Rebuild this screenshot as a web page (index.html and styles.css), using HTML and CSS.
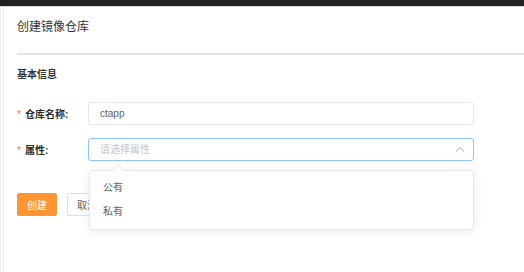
FILE: index.html
```html
<!DOCTYPE html>
<html lang="zh-CN">
<head>
    <meta charset="UTF-8">
    <title>创建镜像仓库</title>
    <link rel="stylesheet" href="styles.css">
</head>
<body>
    <div class="topbar"></div>
    <div class="page">
        <div class="panel">
            <div class="panel-header">创建镜像仓库</div>
            <div class="panel-body">
                <div class="section-title">基本信息</div>
                <form class="form">
                    <div class="form-item">
                        <label class="form-label"><span class="req">*</span>仓库名称:</label>
                        <div class="form-control">
                            <input class="input" type="text" value="ctapp">
                        </div>
                    </div>
                    <div class="form-item">
                        <label class="form-label"><span class="req">*</span>属性:</label>
                        <div class="form-control select">
                            <input class="input is-focus" type="text" placeholder="请选择属性" readonly>
                            <svg class="select-arrow" width="10" height="6" viewBox="0 0 10 6">
                                <path d="M1 5.5 L5 1.5 L9 5.5" fill="none" stroke="#c0c4cc" stroke-width="1.1"/>
                            </svg>
                            <div class="dropdown">
                                <span class="dropdown-arrow"></span>
                                <ul class="dropdown-list">
                                    <li>公有</li>
                                    <li>私有</li>
                                </ul>
                            </div>
                        </div>
                    </div>
                    <div class="form-actions">
                        <button type="button" class="btn btn-primary">创建</button>
                        <button type="button" class="btn">取消</button>
                    </div>
                </form>
            </div>
        </div>
    </div>
</body>
</html>
```

FILE: styles.css
```css
body {
    margin: 0;
    font-family: "Liberation Sans", "Noto Sans CJK SC", sans-serif;
    background: #fff;
    color: #303133;
}
.topbar {
    height: 6px;
    background-color: #222;
    border-bottom: 1px solid #d8d8d8;
}
.page {
    padding-left: 2px;
    border-left: 1px solid #f0f0f0;
    height: 265px;
    box-sizing: border-box;
}
.panel {
    border-left: 1px solid #ececec;
    height: 100%;
}
.panel-header {
    margin-left: 13px;
    padding: 12px 0 18px;
    font-size: 12px;
    line-height: 16px;
    color: #333;
    border-bottom: 2px solid #e5e5e5;
}
.panel-body {
    padding: 13px 0 0 13px;
}
.section-title {
    font-size: 10px;
    line-height: 14px;
    font-weight: bold;
    color: #333;
    margin-bottom: 20px;
}
.form-item {
    display: flex;
    align-items: center;
    margin-bottom: 13px;
}
.form-label {
    width: 71px;
    font-size: 10px;
    font-weight: bold;
    color: #2b2b2b;
}
.req {
    color: #f56c6c;
    margin-right: 4px;
    font-weight: normal;
}
.form-control {
    position: relative;
    width: 386px;
}
.input {
    display: block;
    width: 100%;
    height: 23px;
    box-sizing: border-box;
    padding: 0 11px;
    border: 1px solid #e4e7ed;
    border-radius: 3px;
    font-family: inherit;
    font-size: 10px;
    color: #606266;
    outline: none;
    background: #fff;
}
.input.is-focus {
    border-color: #8fc3ff;
}
.input::placeholder {
    color: #c0c4cc;
}
.select-arrow {
    position: absolute;
    right: 9px;
    top: 8px;
}
.dropdown {
    position: absolute;
    top: 32px;
    left: 1px;
    right: 0;
    background: #fff;
    border: 1px solid #e4e7ed;
    border-radius: 3px;
    box-shadow: 0 2px 10px rgba(0, 0, 0, 0.08);
    z-index: 5;
}
.dropdown-arrow {
    position: absolute;
    top: -5px;
    left: 24px;
    width: 8px;
    height: 8px;
    background: #fff;
    border-left: 1px solid #e4e7ed;
    border-top: 1px solid #e4e7ed;
    transform: rotate(45deg);
}
.dropdown-list {
    list-style: none;
    margin: 0;
    padding: 5px 0;
}
.dropdown-list li {
    height: 24px;
    line-height: 24px;
    padding-left: 13px;
    font-size: 10px;
    color: #606266;
}
.form-actions {
    display: flex;
    gap: 10px;
    margin-top: 32px;
}
.btn {
    width: 40px;
    height: 23px;
    padding: 0;
    border: 1px solid #dcdfe6;
    border-radius: 2px;
    background: #fff;
    color: #606266;
    font-family: inherit;
    font-size: 10px;
    cursor: pointer;
}
.btn-primary {
    background-color: #ff9532;
    border-color: #ff9532;
    color: #fff;
}
```
